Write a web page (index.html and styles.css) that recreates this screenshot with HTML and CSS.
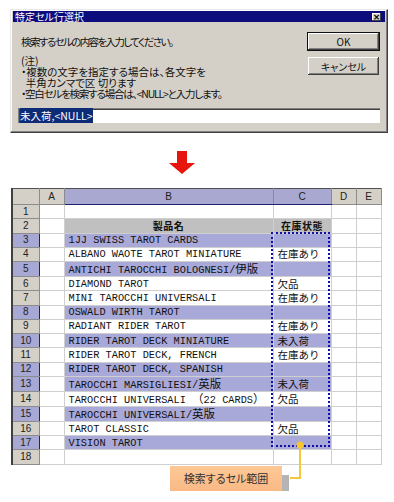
FILE: index.html
```html
<!DOCTYPE html>
<html lang="ja">
<head>
  <meta charset="UTF-8">
  <title>特定セル行選択</title>
  <link rel="stylesheet" href="styles.css">
</head>
<body>
  <div class="dialog">
    <div class="titlebar">
      <span>特定セル行選択</span>
      <span class="close">×</span>
    </div>
    <div class="dialog-body">
      <div class="message">
        <p class="prompt">検索するセルの内容を入力してください。</p>
        <p class="notes">(注)<br>・複数の文字を指定する場合は、各文字を<br>&nbsp;&nbsp;半角カンマで区 切ります<br><span class="tight">・空白セルを検索する場合は、&lt;NULL&gt;と入力します。</span></p>
      </div>
      <div class="buttons">
        <button class="btn btn-default">OK</button>
        <button class="btn">キャンセル</button>
      </div>
    </div>
    <div class="field"><span class="selected-text">未入荷,&lt;NULL&gt;</span></div>
  </div>

  <div class="arrow">
    <svg width="26" height="23" viewBox="0 0 26 23"><path d="M8 0h10v12h8L13 23 0 12h8z" fill="#e8140e"/></svg>
  </div>

  <div class="figure">
    <table class="sheet">
      <colgroup>
        <col class="c-head"><col class="c-a"><col class="c-b"><col class="c-c"><col class="c-d"><col class="c-e">
      </colgroup>
      <tr class="col-heads">
        <th class="corner"></th><th>A</th><th class="hl">B</th><th class="hl">C</th><th>D</th><th>E</th>
      </tr>
      <tr><th>1</th><td></td><td></td><td></td><td></td><td></td></tr>
      <tr class="title-row"><th>2</th><td></td><td class="gray">製品名</td><td class="gray">在庫状態</td><td></td><td></td></tr>
      <tr class="sel"><th>3</th><td></td><td class="name">1JJ SWISS TAROT CARDS</td><td class="stock"></td><td></td><td></td></tr>
      <tr><th>4</th><td></td><td class="name">ALBANO WAOTE TAROT MINIATURE</td><td class="stock">在庫あり</td><td></td><td></td></tr>
      <tr class="sel"><th>5</th><td></td><td class="name">ANTICHI TAROCCHI BOLOGNESI/<span class="jp">伊版</span></td><td class="stock"></td><td></td><td></td></tr>
      <tr><th>6</th><td></td><td class="name">DIAMOND TAROT</td><td class="stock">欠品</td><td></td><td></td></tr>
      <tr><th>7</th><td></td><td class="name">MINI TAROCCHI UNIVERSALI</td><td class="stock">在庫あり</td><td></td><td></td></tr>
      <tr class="sel"><th>8</th><td></td><td class="name">OSWALD WIRTH TAROT</td><td class="stock"></td><td></td><td></td></tr>
      <tr><th>9</th><td></td><td class="name">RADIANT RIDER TAROT</td><td class="stock">在庫あり</td><td></td><td></td></tr>
      <tr class="sel"><th>10</th><td></td><td class="name">RIDER TAROT DECK MINIATURE</td><td class="stock">未入荷</td><td></td><td></td></tr>
      <tr><th>11</th><td></td><td class="name">RIDER TAROT DECK, FRENCH</td><td class="stock">在庫あり</td><td></td><td></td></tr>
      <tr class="sel"><th>12</th><td></td><td class="name">RIDER TAROT DECK, SPANISH</td><td class="stock"></td><td></td><td></td></tr>
      <tr class="sel"><th>13</th><td></td><td class="name">TAROCCHI MARSIGLIESI/<span class="jp">英版</span></td><td class="stock">未入荷</td><td></td><td></td></tr>
      <tr><th>14</th><td></td><td class="name">TAROCCHI UNIVERSALI <span class="jp">（</span>22 CARDS<span class="jp">）</span></td><td class="stock">欠品</td><td></td><td></td></tr>
      <tr class="sel"><th>15</th><td></td><td class="name">TAROCCHI UNIVERSALI/<span class="jp">英版</span></td><td class="stock"></td><td></td><td></td></tr>
      <tr><th>16</th><td></td><td class="name">TAROT CLASSIC</td><td class="stock">欠品</td><td></td><td></td></tr>
      <tr class="sel"><th>17</th><td></td><td class="name">VISION TAROT</td><td class="stock"></td><td></td><td></td></tr>
      <tr><th>18</th><td></td><td></td><td></td><td></td><td></td></tr>
    </table>

    <div class="selection"></div>

    <svg class="connector" width="140" height="60" viewBox="0 0 140 60">
      <path d="M118 4V37H108" fill="none" stroke="#f5c83a" stroke-width="2"/>
      <circle cx="118" cy="4" r="3.5" fill="#f7c52c"/>
    </svg>

    <div class="callout">検索するセル範囲</div>
  </div>
</body>
</html>
```

FILE: styles.css
```css
body {
  margin: 0;
  background-color: #fff;
  font-family: "Noto Sans CJK JP", "Noto Sans", sans-serif;
  color: #111;
}
p {
  margin: 0;
}

/* dialog */
.dialog {
  box-sizing: border-box;
  width: 378px;
  height: 124px;
  margin: 9px 0 0 10px;
  background-color: #d4d0c8;
  border: 1px solid;
  border-color: #e8e8e8 #404040 #404040 #e8e8e8;
  box-shadow: inset -1px -1px #808080, inset 1px 1px #fff;
  padding: 1px 2px;
}
.titlebar {
  display: flex;
  justify-content: space-between;
  align-items: center;
  height: 11px;
  padding: 0 4px 0 2px;
  background-color: #0c0c7c;
  color: #fff;
  font-size: 10px;
  line-height: 11px;
  font-feature-settings: "palt";
}
.close {
  width: 9px;
  height: 8px;
  background-color: #d4d0c8;
  color: #000;
  font-family: "DejaVu Sans", sans-serif;
  font-size: 9px;
  line-height: 8px;
  text-align: center;
  font-weight: bold;
  box-shadow: inset -1px -1px #404040, inset 1px 1px #fff;
}
.dialog-body {
  display: flex;
  height: 86px;
  padding: 0 6px 0 8px;
}
.message {
  flex: 1;
  font-size: 10.5px;
  font-feature-settings: "palt";
}
.prompt {
  margin-top: 13px;
  line-height: 14px;
  letter-spacing: -1.6px;
}
.notes {
  margin-top: 6px;
  line-height: 11px;
}
.tight {
  letter-spacing: -1.2px;
}
.buttons {
  display: flex;
  flex-direction: column;
  width: 71px;
}
.btn {
  height: 18px;
  margin-top: 7px;
  padding: 0;
  background-color: #d4d0c8;
  border: none;
  font-family: "Noto Sans CJK JP", sans-serif;
  font-size: 10px;
  color: #111;
  box-shadow: inset -1px -1px #404040, inset 1px 1px #fff, inset -2px -2px #808080;
  font-feature-settings: "palt";
}
.btn-default {
  margin-top: 11px;
  box-shadow: 0 0 0 1px #111, inset -1px -1px #404040, inset 1px 1px #fff, inset -2px -2px #808080;
  height: 17px;
}
.field {
  height: 15px;
  margin: 0 5px 0 5px;
  background-color: #fff;
  box-shadow: inset 1px 1px #808080, inset 2px 2px #404040;
  padding: 2px 0 0 2px;
  box-sizing: border-box;
  font-size: 10.5px;
  line-height: 12px;
  font-feature-settings: "palt";
}
.selected-text {
  background-color: #0c2c78;
  color: #fff;
}

/* arrow */
.arrow {
  height: 23px;
  margin-top: 18px;
  padding-left: 169px;
}
.arrow svg {
  display: block;
}

/* spreadsheet */
.figure {
  position: relative;
  margin: 14px 0 0 11px;
}
.sheet {
  table-layout: fixed;
  border-collapse: collapse;
  width: 369px;
  font-family: "Liberation Sans", sans-serif;
}
.c-head { width: 27px; }
.c-a { width: 25px; }
.c-b { width: 209px; }
.c-c { width: 58px; }
.c-d { width: 25px; }
.c-e { width: 25px; }
.sheet tr {
  height: 14.28px;
}
.sheet .col-heads {
  height: 16px;
}
.sheet th {
  padding: 0;
  background-color: #d4d0c8;
  border: 1px solid #8c8c8c;
  font-weight: normal;
  font-size: 10px;
  color: #222;
  line-height: 12px;
}
.sheet tr > th:first-child {
  border-left: 2px solid #404040;
}
.col-heads th {
  border-top: 1px solid #505050;
}
.col-heads th.hl {
  background-color: #a8a8d0;
  border-bottom-color: #202070;
}
.sel th {
  background-color: #a8a8d4;
  border-right-color: #20207a;
}
.sheet td {
  padding: 0;
  border: 1px solid #cfcfcf;
  white-space: nowrap;
  overflow: hidden;
  font-size: 10px;
  line-height: 12px;
}
.sel .name,
.sel .stock {
  background-color: #a9a9d9;
}
.gray {
  background-color: #c0c0c0;
  text-align: center;
  font-family: "Noto Sans CJK JP", sans-serif;
  font-weight: bold;
  font-size: 12px;
  letter-spacing: 0.5px;
}
.name {
  padding-left: 4px !important;
  font-family: "Liberation Mono", "Noto Sans CJK JP", monospace;
  font-size: 10.3px !important;
  color: #111;
}
.jp {
  font-family: "Noto Sans CJK JP", sans-serif;
  font-size: 11.5px;
}
.stock {
  padding-left: 4px !important;
  font-family: "Noto Sans CJK JP", sans-serif;
  font-size: 10.5px !important;
}

.selection {
  position: absolute;
  left: 260px;
  top: 44px;
  width: 55px;
  height: 211px;
  border: 2px dotted #1010a8;
}
.connector {
  position: absolute;
  left: 171px;
  top: 253px;
}

.callout {
  position: relative;
  width: 112px;
  height: 25px;
  margin: 1px 0 0 159px;
  background: linear-gradient(#fdc896, #f9b985);
  box-shadow: 7px 9px 0 #b4b4b4;
  color: #333;
  font-size: 11px;
  line-height: 25px;
  text-align: center;
  font-feature-settings: "palt";
}
```
